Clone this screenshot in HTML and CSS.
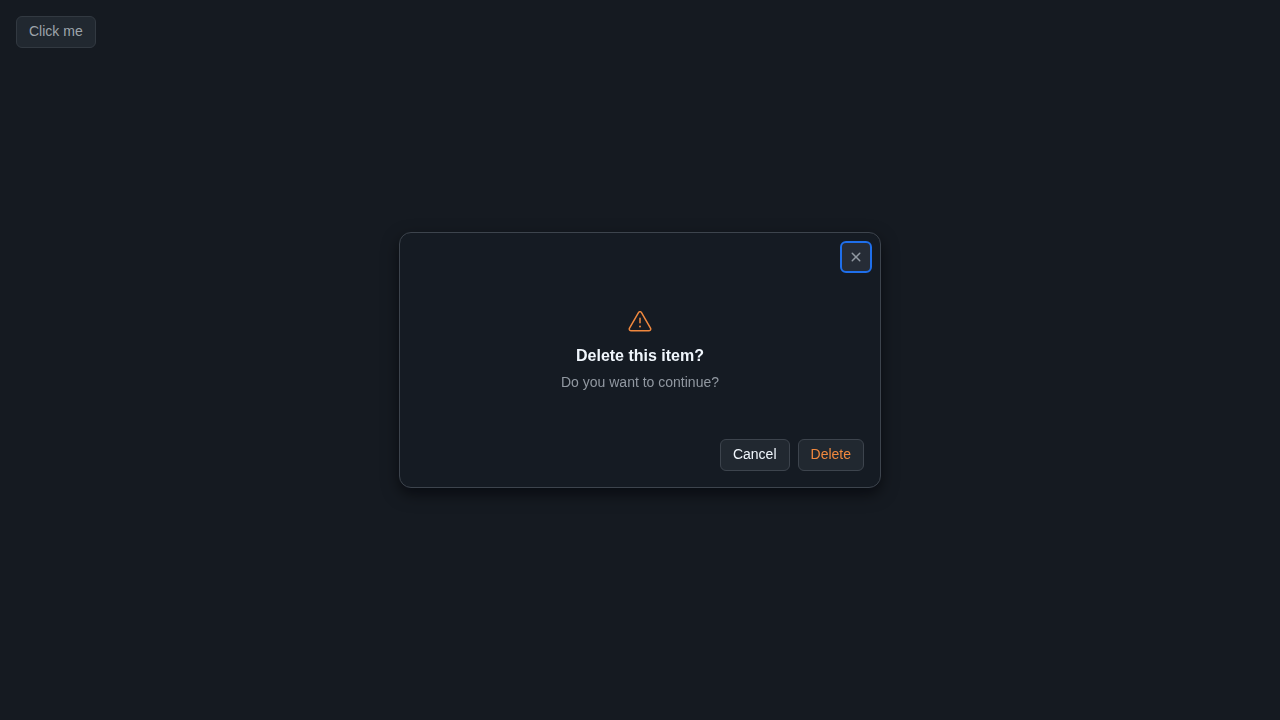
FILE: index.html
```html
<!DOCTYPE html>
<html lang="en">
<head>
<meta charset="utf-8">
<title>Delete this item?</title>
<link rel="stylesheet" href="styles.css">
</head>
<body>
<main class="page">
  <button type="button" class="button">Click me</button>
</main>
<div class="backdrop">
  <section class="dialog" role="alertdialog" aria-modal="true" aria-labelledby="dialog-title" aria-describedby="dialog-text">
    <header class="dialog-header">
      <button type="button" class="close" aria-label="Close">
        <svg width="16" height="16" viewBox="0 0 16 16" fill="currentColor" aria-hidden="true"><path d="M3.72 3.72a.75.75 0 0 1 1.06 0L8 6.94l3.22-3.22a.749.749 0 0 1 1.275.326.749.749 0 0 1-.215.734L9.06 8l3.22 3.22a.749.749 0 0 1-.326 1.275.749.749 0 0 1-.734-.215L8 9.06l-3.22 3.22a.751.751 0 0 1-1.042-.018.751.751 0 0 1-.018-1.042L6.94 8 3.72 4.78a.75.75 0 0 1 0-1.06Z"/></svg>
      </button>
    </header>
    <div class="dialog-body">
      <svg class="alert" width="24" height="24" viewBox="0 0 24 24" fill="currentColor" aria-hidden="true"><path d="M13 17.5a1 1 0 1 1-2 0 1 1 0 0 1 2 0Zm-.25-8.25a.75.75 0 0 0-1.5 0v4.5a.75.75 0 0 0 1.5 0v-4.5Z"/><path d="M9.836 3.244c.963-1.665 3.365-1.665 4.328 0l8.967 15.504c.963 1.667-.24 3.752-2.165 3.752H3.034c-1.926 0-3.128-2.085-2.165-3.752Zm3.03.751a1.002 1.002 0 0 0-1.732 0L2.168 19.499A1.002 1.002 0 0 0 3.034 21h17.932a1.002 1.002 0 0 0 .866-1.5L12.866 3.994Z"/></svg>
      <h1 class="title" id="dialog-title">Delete this item?</h1>
      <p class="text" id="dialog-text">Do you want to continue?</p>
    </div>
    <footer class="dialog-footer">
      <button type="button" class="button button-default">Cancel</button>
      <button type="button" class="button button-danger">Delete</button>
    </footer>
  </section>
</div>
</body>
</html>
```
FILE: styles.css
```css
* {
  box-sizing: border-box;
}

body {
  margin: 0;
  min-height: 100vh;
  background: #151a21;
  font-family: "Liberation Sans", Arial, sans-serif;
  font-size: 14px;
  line-height: 20px;
}

.page {
  padding: 16px;
}

.button {
  height: 32px;
  padding: 0 12px 2px;
  border: 1px solid #323941;
  border-radius: 6px;
  background: #212830;
  color: #9da4ab;
  font: inherit;
}

.button-default {
  border-color: #3d444d;
  color: #f0f6fc;
}

.button-danger {
  border-color: #3d444d;
  color: #f0883e;
}

.backdrop {
  position: fixed;
  inset: 0;
  display: flex;
  align-items: center;
  justify-content: center;
}

.dialog {
  width: 100%;
  max-width: 482px;
  border: 1px solid #3d444d;
  border-radius: 12px;
  background: #151b23;
  box-shadow: 0 6px 12px -3px rgba(1, 4, 9, 0.4), 0 6px 18px 0 rgba(1, 4, 9, 0.4);
}

.dialog-header {
  display: flex;
  justify-content: flex-end;
  padding: 8px 8px 0;
}

.close {
  display: grid;
  place-items: center;
  width: 32px;
  height: 32px;
  padding: 0;
  border: 2px solid #1f6feb;
  border-radius: 6px;
  background: #262c36;
  color: #9198a1;
}

.dialog-body {
  display: flex;
  flex-direction: column;
  align-items: center;
  padding: 36px 16px 47px;
  text-align: center;
}

.alert {
  color: #f0883e;
}

.title {
  margin: 11px 0 4px;
  color: #f0f6fc;
  font-size: 16px;
  line-height: 24px;
}

.text {
  margin: 0;
  color: #9198a1;
}

.dialog-footer {
  display: flex;
  justify-content: flex-end;
  gap: 8px;
  padding: 0 16px 16px;
}
```
